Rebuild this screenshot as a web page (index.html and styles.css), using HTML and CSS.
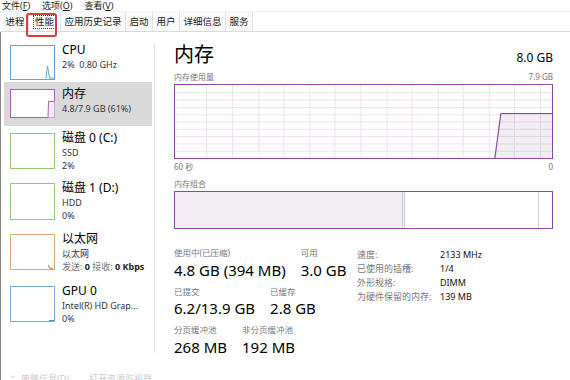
FILE: index.html
```html
<!DOCTYPE html>
<html lang="zh-CN">
<head>
<meta charset="utf-8">
<title>任务管理器 - 性能</title>
<link rel="stylesheet" href="styles.css">
</head>
<body>
<div class="app">
  <div class="menu">
    <span class="menu-item">文件(<u>F</u>)</span>
    <span class="menu-item">选项(<u>O</u>)</span>
    <span class="menu-item">查看(<u>V</u>)</span>
  </div>
  <div class="tabs">
    <div class="tab">进程</div>
    <div class="tab tab-active"><span class="focus">性能</span><span class="annot"></span></div>
    <div class="tab">应用历史记录</div>
    <div class="tab">启动</div>
    <div class="tab">用户</div>
    <div class="tab">详细信息</div>
    <div class="tab">服务</div>
  </div>
  <div class="main">
    <div class="sidebar">
      <div class="item item-cpu">
        <svg class="thumb thumb-cpu" viewBox="0 0 45 35" preserveAspectRatio="none">
          <rect x="0.5" y="0.5" width="44" height="34" fill="#fff" stroke="#5ea6d8"/>
          <polyline points="36,33.5 37.5,21 39.5,33 44,33" fill="none" stroke="#5ea6d8" stroke-width="1"/>
        </svg>
        <div class="info">
          <div class="title">CPU</div>
          <div class="sub">2%&nbsp; 0.80 GHz</div>
        </div>
      </div>
      <div class="item item-mem selected">
        <svg class="thumb thumb-mem" viewBox="0 0 45 29" preserveAspectRatio="none">
          <rect x="0.5" y="0.5" width="44" height="28" fill="#fff" stroke="#a462bd"/>
          <polygon points="38,28.5 38.5,12.5 44.5,12.5 44.5,28.5" fill="#f3ecf6"/>
          <polyline points="38,28.5 38.5,12.5 44.5,12.5" fill="none" stroke="#a462bd" stroke-width="1"/>
        </svg>
        <div class="info">
          <div class="title">内存</div>
          <div class="sub">4.8/7.9 GB (61%)</div>
        </div>
      </div>
      <div class="item item-disk0">
        <svg class="thumb thumb-disk" viewBox="0 0 45 36" preserveAspectRatio="none">
          <rect x="0.5" y="0.5" width="44" height="35" fill="#fff" stroke="#95c774"/>
        </svg>
        <div class="info">
          <div class="title">磁盘 0 (C:)</div>
          <div class="sub">SSD</div>
          <div class="sub">2%</div>
        </div>
      </div>
      <div class="item item-disk1">
        <svg class="thumb thumb-disk1" viewBox="0 0 45 37" preserveAspectRatio="none">
          <rect x="0.5" y="0.5" width="44" height="36" fill="#fff" stroke="#95c774"/>
        </svg>
        <div class="info">
          <div class="title">磁盘 1 (D:)</div>
          <div class="sub">HDD</div>
          <div class="sub">0%</div>
        </div>
      </div>
      <div class="item item-eth">
        <svg class="thumb thumb-eth" viewBox="0 0 45 36" preserveAspectRatio="none">
          <rect x="0.5" y="0.5" width="44" height="35" fill="#fff" stroke="#d9a877"/>
          <polyline points="38,31 40,34 43,35" fill="none" stroke="#c98a4c" stroke-width="1.2"/>
        </svg>
        <div class="info">
          <div class="title">以太网</div>
          <div class="sub">以太网</div>
          <div class="sub"><span class="muted">发送:</span> <b>0</b> <span class="muted">接收:</span> <b>0 Kbps</b></div>
        </div>
      </div>
      <div class="item item-gpu">
        <svg class="thumb thumb-gpu" viewBox="0 0 45 36" preserveAspectRatio="none">
          <rect x="0.5" y="0.5" width="44" height="35" fill="#fff" stroke="#79aed2"/>
          <polyline points="39,34.5 44,34.5" fill="none" stroke="#4f8fbf" stroke-width="1"/>
        </svg>
        <div class="info">
          <div class="title">GPU 0</div>
          <div class="sub">Intel(R) HD Grap...</div>
          <div class="sub">0%</div>
        </div>
      </div>
    </div>
    <div class="divider"></div>
    <div class="panel">
      <div class="head">
        <div class="big-title">内存</div>
        <div class="total">8.0 GB</div>
      </div>
      <div class="cap-row">
        <span>内存使用量</span>
        <span>7.9 GB</span>
      </div>
      <div class="graph">
        <svg class="graph-svg" viewBox="0 0 376 73" preserveAspectRatio="none">
          <g stroke="#eee0f0" stroke-width="1">
            <line x1="0" y1="7.8" x2="376" y2="7.8"/>
            <line x1="0" y1="15.1" x2="376" y2="15.1"/>
            <line x1="0" y1="22.4" x2="376" y2="22.4"/>
            <line x1="0" y1="29.7" x2="376" y2="29.7"/>
            <line x1="0" y1="37" x2="376" y2="37"/>
            <line x1="0" y1="44.3" x2="376" y2="44.3"/>
            <line x1="0" y1="51.6" x2="376" y2="51.6"/>
            <line x1="0" y1="58.9" x2="376" y2="58.9"/>
            <line x1="0" y1="66.2" x2="376" y2="66.2"/>
            <line x1="31.5" y1="0" x2="31.5" y2="73"/>
            <line x1="57.5" y1="0" x2="57.5" y2="73"/>
            <line x1="83.5" y1="0" x2="83.5" y2="73"/>
            <line x1="108.5" y1="0" x2="108.5" y2="73"/>
            <line x1="134.5" y1="0" x2="134.5" y2="73"/>
            <line x1="159.5" y1="0" x2="159.5" y2="73"/>
            <line x1="185.5" y1="0" x2="185.5" y2="73"/>
            <line x1="211.5" y1="0" x2="211.5" y2="73"/>
            <line x1="236.5" y1="0" x2="236.5" y2="73"/>
            <line x1="262.5" y1="0" x2="262.5" y2="73"/>
            <line x1="287.5" y1="0" x2="287.5" y2="73"/>
            <line x1="313.5" y1="0" x2="313.5" y2="73"/>
            <line x1="338.5" y1="0" x2="338.5" y2="73"/>
            <line x1="364.5" y1="0" x2="364.5" y2="73"/>
          </g>
          <polygon points="319,73 325,28.5 376,28.5 376,73" fill="rgba(120,100,130,0.11)"/>
          <polyline points="319,73 325,28.5 376,28.5" fill="none" stroke="#8b4a9f" stroke-width="1.2"/>
        </svg>
      </div>
      <div class="axis-row">
        <span>60 秒</span>
        <span>0</span>
      </div>
      <div class="cap-row cap-comp">
        <span>内存组合</span>
      </div>
      <div class="comp">
        <div class="seg seg-used"></div>
        <div class="seg seg-cache"></div>
        <div class="seg seg-free"></div>
      </div>
      <div class="stats">
        <div class="stats-left">
          <div class="stat-row">
            <div class="stat">
              <div class="label">使用中(已压缩)</div>
              <div class="value">4.8 GB (394 MB)</div>
            </div>
            <div class="stat">
              <div class="label">可用</div>
              <div class="value">3.0 GB</div>
            </div>
          </div>
          <div class="stat-row">
            <div class="stat">
              <div class="label">已提交</div>
              <div class="value">6.2/13.9 GB</div>
            </div>
            <div class="stat">
              <div class="label">已缓存</div>
              <div class="value">2.8 GB</div>
            </div>
          </div>
          <div class="stat-row">
            <div class="stat">
              <div class="label">分页缓冲池</div>
              <div class="value">268 MB</div>
            </div>
            <div class="stat">
              <div class="label">非分页缓冲池</div>
              <div class="value">192 MB</div>
            </div>
          </div>
        </div>
        <div class="stats-right">
          <div class="k">速度:</div><div class="v">2133 MHz</div>
          <div class="k">已使用的插槽:</div><div class="v">1/4</div>
          <div class="k">外形规格:</div><div class="v">DIMM</div>
          <div class="k">为硬件保留的内存:</div><div class="v">139 MB</div>
        </div>
      </div>
    </div>
  </div>
  <div class="footer">
    <span class="chev">⌃</span><span class="foot-link">简略信息(<u>D</u>)</span>
    <span class="foot-link foot-monitor">打开资源监视器</span>
  </div>
</div>
</body>
</html>
```
FILE: styles.css
```css
html, body {
  margin: 0;
  padding: 0;
  background: #ffffff;
}

body {
  width: 570px;
  height: 380px;
  overflow: hidden;
  font-family: "Noto Sans", "Noto Sans CJK SC", sans-serif;
  color: #000;
}

.app {
  width: 570px;
  height: 380px;
  display: flex;
  flex-direction: column;
}

/* menu bar */
.menu {
  height: 11px;
  line-height: 11px;
  font-size: 9px;
  padding-left: 2px;
  display: flex;
  gap: 12px;
  border-bottom: 1px solid #f1f1f1;
  color: #1a1a1a;
}

.menu-item u {
  text-decoration-thickness: 1px;
}

/* tabs */
.tabs {
  height: 19px;
  display: flex;
  padding-left: 2px;
  border-bottom: 1px solid #d9d9d9;
  font-size: 9.5px;
}

.tab {
  position: relative;
  padding: 0 3.5px;
  line-height: 19px;
  background: #fafafa;
  border-right: 1px solid #e3e3e3;
  color: #1a1a1a;
  white-space: nowrap;
}

.tab-active {
  background: #ffffff;
  padding: 0 5px;
}

.focus {
  display: inline-block;
  line-height: 12px;
  padding: 0 1px;
  outline: 1px dotted #444;
  outline-offset: 0;
}

.annot {
  position: absolute;
  left: -3px;
  top: 1px;
  width: 27px;
  height: 20px;
  border: 2px solid #d93c3c;
  border-radius: 3px;
}

/* main */
.main {
  flex: 1;
  display: flex;
  border-left: 1px solid #8a8a8a;
  min-height: 0;
}

.sidebar {
  width: 148px;
  padding: 6px 0 0 3px;
  display: flex;
  flex-direction: column;
}

.item {
  display: flex;
  gap: 7px;
  padding: 6px 0 0 6px;
  box-sizing: border-box;
}

.item.selected {
  background: #d9d9d9;
}

.item-cpu { height: 44px; }
.item-mem { height: 44px; }
.item-disk0 { height: 50px; }
.item-disk1 { height: 51px; }
.item-eth { height: 52px; }
.item-gpu { height: 50px; }

.thumb {
  display: block;
  width: 45px;
  margin-top: 1px;
  flex: none;
}

.thumb-cpu { height: 35px; }
.thumb-mem { height: 29px; }
.thumb-disk { height: 36px; }
.thumb-disk1 { height: 37px; }
.thumb-eth { height: 36px; }
.thumb-gpu { height: 36px; }

.info {
  display: flex;
  flex-direction: column;
  margin-top: -2px;
}

.title {
  font-size: 12px;
  line-height: 16px;
  white-space: nowrap;
}

.sub {
  font-size: 9px;
  line-height: 13px;
  color: #333;
  white-space: nowrap;
}

.muted {
  color: #777;
}

.sub b {
  color: #222;
}

.divider {
  width: 1px;
  background: #e4e4e4;
  margin: 12px 0 14px 2px;
}

/* panel */
.panel {
  flex: 1;
  padding: 11px 17px 0 19px;
  display: flex;
  flex-direction: column;
}

.head {
  display: flex;
  justify-content: space-between;
  align-items: baseline;
}

.big-title {
  font-size: 20px;
  line-height: 24px;
}

.total {
  font-size: 12px;
  line-height: 16px;
}

.cap-row,
.axis-row {
  display: flex;
  justify-content: space-between;
  font-size: 8px;
  line-height: 11px;
  color: #777;
}

.cap-row {
  margin-top: 4px;
}

.graph {
  margin-top: 2px;
  height: 75px;
  border: 1px solid #8b4a9f;
  box-sizing: border-box;
}

.graph-svg {
  display: block;
  width: 100%;
  height: 100%;
}

.axis-row {
  margin-top: 2px;
}

.cap-comp {
  margin-top: 6px;
}

.comp {
  margin-top: 2px;
  height: 38px;
  border: 1px solid #8b4a9f;
  box-sizing: border-box;
  display: flex;
}

.seg-used {
  width: 227px;
  background: #f1eef3;
  border-right: 3px double #d3c9da;
}

.seg-cache {
  flex: 1;
  border-right: 1px solid #d8cfdd;
}

.seg-free {
  width: 13px;
}

/* stats */
.stats {
  margin-top: 18px;
  display: flex;
}

.stats-left {
  width: 183px;
  display: flex;
  flex-direction: column;
  gap: 5.5px;
}

.stat-row {
  display: flex;
  gap: 15px;
}

.label {
  font-size: 8.5px;
  line-height: 12.5px;
  color: #777;
  white-space: nowrap;
}

.value {
  font-size: 15px;
  line-height: 20.5px;
  white-space: nowrap;
}

.stats-right {
  display: grid;
  grid-template-columns: 83px auto;
  grid-auto-rows: 14px;
  font-size: 9px;
  line-height: 14px;
  margin-top: 1px;
  align-content: start;
}

.stats-right .k {
  color: #777;
  white-space: nowrap;
}

.stats-right .v {
  color: #111;
  white-space: nowrap;
}

/* footer */
.footer {
  height: 13px;
  flex: none;
  display: flex;
  align-items: flex-start;
  font-size: 9px;
  line-height: 13px;
  color: #c9c9c9;
  padding: 5px 0 0 8px;
  box-sizing: border-box;
  border-left: 1px solid #8a8a8a;
  overflow: hidden;
}

.chev {
  margin-right: 4px;
}

.foot-monitor {
  margin-left: 20px;
}
```
